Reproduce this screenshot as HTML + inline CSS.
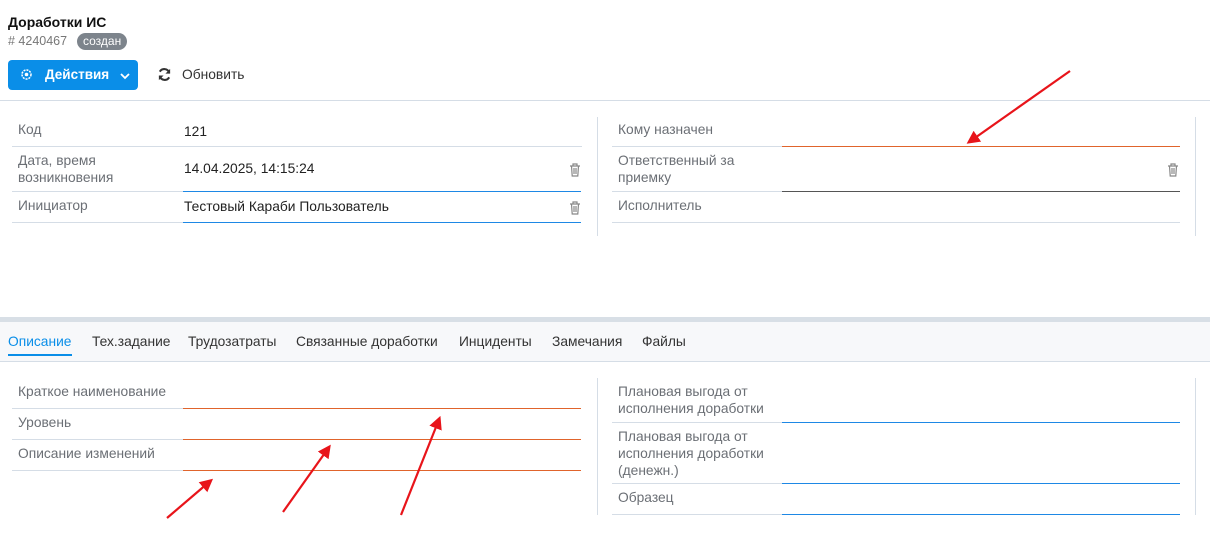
<!DOCTYPE html>
<html><head><meta charset="utf-8"><style>
*{margin:0;padding:0;box-sizing:border-box}
body{width:1210px;height:540px;background:#fff;font-family:"Liberation Sans",sans-serif;font-size:13.8px;color:#222;position:relative;overflow:hidden}
.a{position:absolute}
.lbl{position:absolute;color:#6b6f75;line-height:17px;font-size:13.8px}
.val{position:absolute;color:#222;line-height:17px;font-size:13.8px}
.ln{position:absolute;height:1px;background:#d5dde6}
.bl{position:absolute;height:1px;background:#1e88e5}
.or{position:absolute;height:1px;background:#e0642c}
.vl{position:absolute;width:1px;background:#d5dde6}
.tab{position:absolute;top:334px;font-size:13.8px;color:#333}
</style></head><body>
<div class="a" style="left:8px;top:14px;font-weight:bold;font-size:14px;color:#111">Доработки ИС</div>
<div class="a" style="left:8px;top:34px;color:#777;font-size:12.5px">#&nbsp;4240467</div>
<div class="a" style="left:77px;top:33px;background:#7d848c;color:#fff;font-size:12px;border-radius:9px;padding:1px 6px;line-height:15px">создан</div>
<div class="a" style="left:8px;top:60px;width:130px;height:30px;background:#0a8ee8;border-radius:4px;color:#fff;font-weight:bold;font-size:13.5px">
<svg class="a" style="left:13px;top:9px" width="12" height="12" viewBox="0 0 12 12"><circle cx="5.5" cy="5.5" r="4.5" fill="none" stroke="#fff" stroke-width="1.5" stroke-dasharray="2 1"/><circle cx="5.5" cy="5.5" r="1.8" fill="#fff"/></svg>
<span class="a" style="left:37px;top:7px">Действия</span>
<svg class="a" style="left:112px;top:12px" width="10" height="8" viewBox="0 0 10 8"><path d="M1 2l4 4 4-4" stroke="#fff" stroke-width="1.8" fill="none"/></svg>
</div>
<svg class="a" style="left:157px;top:67px" width="15" height="15" viewBox="0 0 16 16"><path d="M13 6A5.5 5.5 0 0 0 3 5M3 10a5.5 5.5 0 0 0 10 1" stroke="#333" stroke-width="2.2" fill="none"/><path d="M14 2v5h-5z M2 14v-5h5z" fill="#333"/></svg>
<div class="a" style="left:182px;top:67px;color:#333">Обновить</div>
<div class="ln" style="left:0;top:100px;width:1210px"></div>

<div class="lbl" style="left:18px;top:121px">Код</div><div class="val" style="left:184px;top:123px">121</div>
<div class="ln" style="left:12px;top:146px;width:570px"></div>
<div class="lbl" style="left:18px;top:152px">Дата, время<br>возникновения</div><div class="val" style="left:184px;top:160px">14.04.2025, 14:15:24</div>
<div class="ln" style="left:12px;top:191px;width:171px"></div><div class="bl" style="left:183px;top:191px;width:398px"></div>
<div class="lbl" style="left:18px;top:197px">Инициатор</div><div class="val" style="left:184px;top:198px">Тестовый Караби Пользователь</div>
<div class="ln" style="left:12px;top:222px;width:171px"></div><div class="bl" style="left:183px;top:222px;width:398px"></div>
<svg class="a" style="left:569px;top:163px" width="12" height="14" viewBox="0 0 12 14"><path d="M1 3h10M4 3V1h4v2M2.5 3l.7 10h5.6l.7-10M5 5v6M7 5v6" stroke="#888" stroke-width="1.2" fill="none"/></svg>
<svg class="a" style="left:569px;top:201px" width="12" height="14" viewBox="0 0 12 14"><path d="M1 3h10M4 3V1h4v2M2.5 3l.7 10h5.6l.7-10M5 5v6M7 5v6" stroke="#888" stroke-width="1.2" fill="none"/></svg>
<div class="vl" style="left:597px;top:117px;height:119px"></div>

<div class="lbl" style="left:618px;top:121px">Кому назначен</div>
<div class="ln" style="left:612px;top:146px;width:170px"></div><div class="or" style="left:782px;top:146px;width:398px"></div>
<div class="lbl" style="left:618px;top:152px">Ответственный за<br>приемку</div>
<div class="ln" style="left:612px;top:191px;width:170px"></div><div class="a" style="left:782px;top:191px;width:398px;height:1px;background:#555"></div>
<svg class="a" style="left:1167px;top:163px" width="12" height="14" viewBox="0 0 12 14"><path d="M1 3h10M4 3V1h4v2M2.5 3l.7 10h5.6l.7-10M5 5v6M7 5v6" stroke="#888" stroke-width="1.2" fill="none"/></svg>
<div class="lbl" style="left:618px;top:197px">Исполнитель</div>
<div class="ln" style="left:612px;top:222px;width:568px"></div>
<div class="vl" style="left:1195px;top:117px;height:119px"></div>

<div class="a" style="left:0;top:317px;width:1210px;height:5px;background:#d8dfe6"></div>
<div class="a" style="left:0;top:322px;width:1210px;height:40px;background:#f7f8fa;border-bottom:1px solid #d5dde6"></div>
<div class="tab" style="left:8px;color:#0a8ee8">Описание</div>
<div class="a" style="left:8px;top:354px;width:64px;height:2px;background:#0a8ee8"></div>
<div class="tab" style="left:92px">Тех.задание</div>
<div class="tab" style="left:188px">Трудозатраты</div>
<div class="tab" style="left:296px">Связанные доработки</div>
<div class="tab" style="left:459px">Инциденты</div>
<div class="tab" style="left:552px">Замечания</div>
<div class="tab" style="left:642px">Файлы</div>

<div class="lbl" style="left:18px;top:383px">Краткое наименование</div>
<div class="ln" style="left:12px;top:408px;width:171px"></div><div class="or" style="left:183px;top:408px;width:398px"></div>
<div class="lbl" style="left:18px;top:414px">Уровень</div>
<div class="ln" style="left:12px;top:439px;width:171px"></div><div class="or" style="left:183px;top:439px;width:398px"></div>
<div class="lbl" style="left:18px;top:445px">Описание изменений</div>
<div class="ln" style="left:12px;top:470px;width:171px"></div><div class="or" style="left:183px;top:470px;width:398px"></div>
<div class="vl" style="left:597px;top:378px;height:137px"></div>

<div class="lbl" style="left:618px;top:383px">Плановая выгода от<br>исполнения доработки</div>
<div class="ln" style="left:612px;top:422px;width:170px"></div><div class="bl" style="left:782px;top:422px;width:398px"></div>
<div class="lbl" style="left:618px;top:428px">Плановая выгода от<br>исполнения доработки<br>(денежн.)</div>
<div class="ln" style="left:612px;top:483px;width:170px"></div><div class="bl" style="left:782px;top:483px;width:398px"></div>
<div class="lbl" style="left:618px;top:489px">Образец</div>
<div class="ln" style="left:612px;top:514px;width:170px"></div><div class="bl" style="left:782px;top:514px;width:398px"></div>
<div class="vl" style="left:1195px;top:378px;height:137px"></div>

<svg class="a" style="left:0;top:0" width="1210" height="540">
<defs><marker id="h" markerWidth="6" markerHeight="6" refX="3" refY="3" orient="auto"><path d="M0 0L6 3L0 6z" fill="#e8141a"/></marker></defs>
<g stroke="#e8141a" stroke-width="2.2" marker-end="url(#h)">
<line x1="1070" y1="71" x2="972" y2="140"/>
<line x1="167" y1="518" x2="208" y2="483"/>
<line x1="283" y1="512" x2="327" y2="450"/>
<line x1="401" y1="515" x2="438" y2="422"/>
</g></svg>
</body></html>
